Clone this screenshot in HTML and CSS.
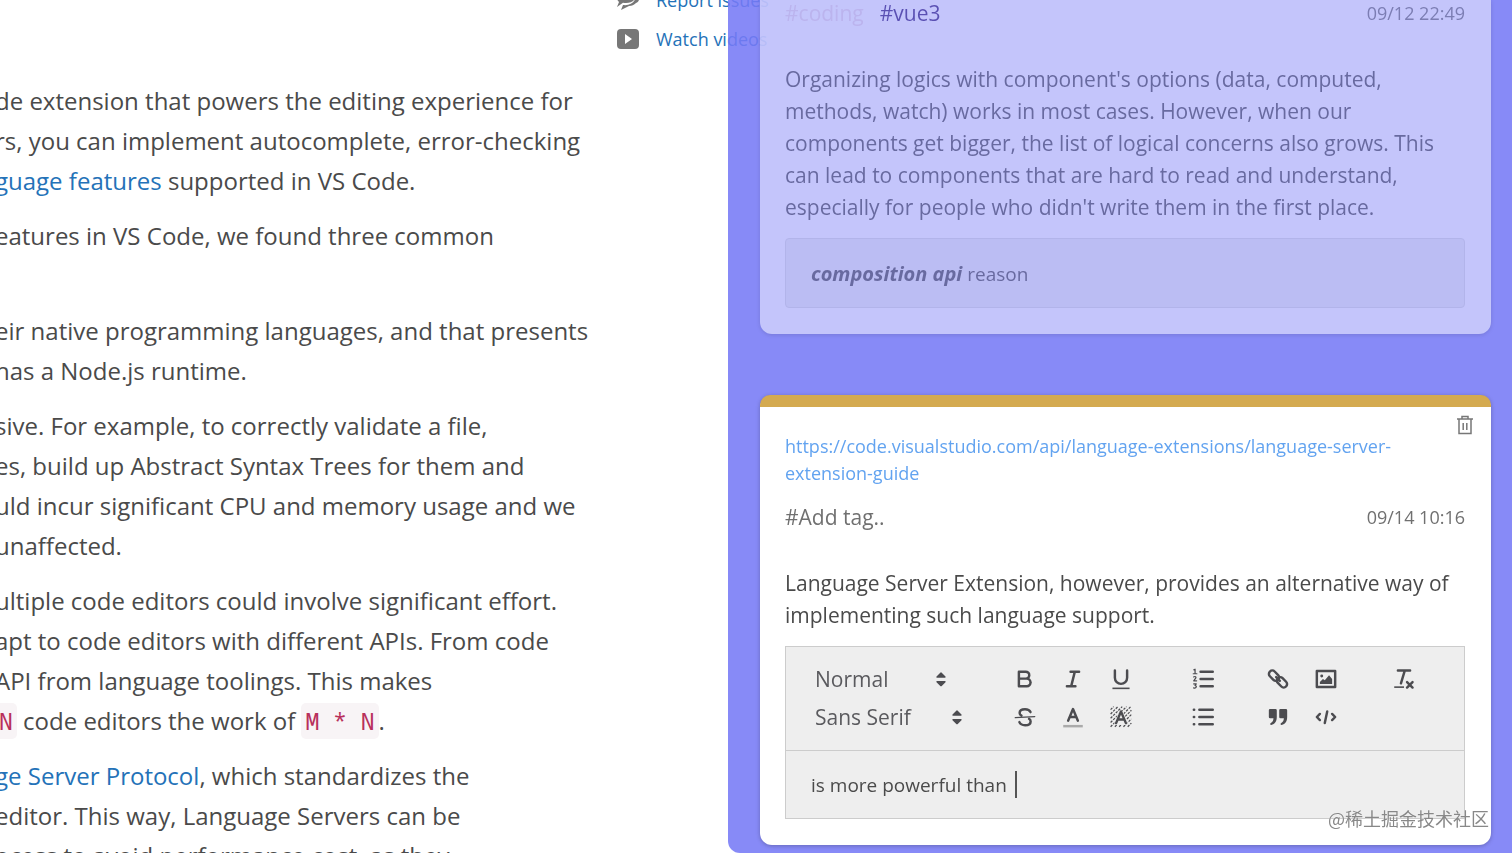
FILE: index.html
```html
<!DOCTYPE html>
<html lang="en">
    <head>
        <meta charset="utf-8">
        <title>Language Server Extension Guide</title>
        <link rel="stylesheet" href="styles.css">
    </head>
    <body>
        <div class="page">
            <main class="article">
                <p>de extension that powers the editing experience for<br>
                rs, you can implement autocomplete, error-checking<br>
                <a href="#">guage features</a> supported in VS Code.</p>
                <p>eatures in VS Code, we found three common<br>&nbsp;</p>
                <p>eir native programming languages, and that presents<br>
                has a Node.js runtime.</p>
                <p>sive. For example, to correctly validate a file,<br>
                es, build up Abstract Syntax Trees for them and<br>
                uld incur significant CPU and memory usage and we<br>
                unaffected.</p>
                <p>ultiple code editors could involve significant effort.<br>
                apt to code editors with different APIs. From code<br>
                API from language toolings. This makes<br>
                <code>N</code> code editors the work of <code>M * N</code>.</p>
                <p><a href="#">ge Server Protocol</a>, which standardizes the<br>
                editor. This way, Language Servers can be<br>
                ocess to avoid performance cost, as they</p>
            </main>
            <aside class="links">
                <a href="#">
                    <svg viewBox="0 0 24 24"><path d="M1 10c0-5 4-8 9-8s9 3 9 7-4 6-9 6c-1 0-2 0-3-.3L1 19l2-5c-1-1-2-2-2-4zM20 7c2 1 3 3 3 4 0 2-1 3-3 4-2 2-4 3-7 3l-8 4 2-5c7 1 13-3 13-10z"/></svg>
                    Report issues
                </a>
                <a href="#">
                    <svg viewBox="0 0 24 24"><path fill-rule="evenodd" d="M5 2h14a4 4 0 0 1 4 4v12a4 4 0 0 1-4 4H5a4 4 0 0 1-4-4V6a4 4 0 0 1 4-4zm4 5v10l7-5z"/></svg>
                    Watch videos
                </a>
            </aside>
        </div>

        <!-- notes drawer -->
        <section class="drawer">
            <article class="card card-old">
                <div class="meta">
                    <div class="tags"><span class="tag-pale">#coding</span><span class="tag">#vue3</span></div>
                    <time>09/12 22:49</time>
                </div>
                <p class="quote">Organizing logics with component's options (data, computed,<br>
                methods, watch) works in most cases. However, when our<br>
                components get bigger, the list of logical concerns also grows. This<br>
                can lead to components that are hard to read and understand,<br>
                especially for people who didn't write them in the first place.</p>
                <div class="memo"><strong><em>composition api</em></strong> reason</div>
            </article>

            <article class="card card-new">
                <button class="trash" aria-label="Delete">
                    <svg viewBox="0 0 18 20"><path d="M1 4h16M6 4V1.500h6V4M3 4v14.500h12V4M7.200 8v7M10.800 8v7"/></svg>
                </button>
                <a class="url" href="#">https://code.visualstudio.com/api/language-extensions/language-server-<br>extension-guide</a>
                <div class="meta">
                    <input class="add-tag" type="text" placeholder="#Add tag.." aria-label="Add tag">
                    <time>09/14 10:16</time>
                </div>
                <p class="quote">Language Server Extension, however, provides an alternative way of<br>
                implementing such language support.</p>

                <div class="editor">
                    <div class="toolbar">
                        <div class="pickers">
                            <div class="picker">
                                <select aria-label="Text size"><option>Normal</option></select>
                                <svg viewBox="0 0 18 18"><path d="M6 11h6l-3 3zM6 7.500h6l-3-3z"/></svg>
                            </div>
                            <div class="picker picker-font">
                                <select aria-label="Font"><option>Sans Serif</option></select>
                                <svg viewBox="0 0 18 18"><path d="M6 11h6l-3 3zM6 7.500h6l-3-3z"/></svg>
                            </div>
                        </div>
                        <div class="group three">
                            <button aria-label="Bold"><svg viewBox="0 0 18 18"><path d="M4 3h5.500A2.900 2.900 0 0 1 12.500 6 2.900 2.900 0 0 1 9.500 8.700H4V3zM4 8.700h6.500A3 3 0 0 1 13.500 11.800 3 3 0 0 1 10.500 15H4V8.700z"/></svg></button>
                            <button aria-label="Italic"><svg viewBox="0 0 18 18"><path d="M7 3h7M4 15h7M7.500 15l3-12"/></svg></button>
                            <button aria-label="Underline"><svg viewBox="0 0 18 18"><path d="M4 2v6a5 5 0 0 0 10 0V2"/><rect class="fill" x="2" y="16" width="14" height="1.300"/></svg></button>
                            <button aria-label="Strike"><svg viewBox="0 0 18 18"><path class="thin" d="M1 9.500l16-.8"/><path d="M13.500 5C12.800 3.400 11.200 2.700 9 2.700 6.400 2.700 4.600 3.900 4.600 5.700c0 1 .6 1.700 1.500 2.200M12.300 10.500c.8.500 1.300 1.200 1.300 2.100 0 1.900-1.900 3.100-4.500 3.100-2.300 0-4-.8-4.700-2.500"/></svg></button>
                            <button aria-label="Colour"><svg viewBox="0 0 18 18"><path class="pale" d="M1 16.500h16"/><path d="M5 12L9 2.500l4 9.500M6.500 9h5"/></svg></button>
                            <button aria-label="Background">
                                <svg viewBox="0 0 18 18">
                                    <path class="hatch" d="M.5 3L3 .5M.5 6.500l6-6M.5 10l9.500-9.500M.5 13.500L13.500.5M.5 17L17 .5M4 17L17.500 3.500M7.500 17L17.500 7M11 17l6.500-6.500M14.500 17l3-3"/>
                                    <path class="halo" d="M5 14L9 5l4 9z"/>
                                    <path d="M5 14L9 4.500l4 9.500M6.500 11h5"/>
                                </svg>
                            </button>
                        </div>
                        <div class="group">
                            <button aria-label="Ordered list"><svg viewBox="0 0 18 18"><path d="M7 3h10M7 9h10M7 15h10"/><path class="thin" d="M1.500 1.500l1-.5v3.500M1 4.700h3M1.300 7.300c1.300-.8 2.400 0 1.700 1L1.400 10.500h2.400M1.400 13h2.100l-1 1.300c1.800.2 1.200 2.600-1.200 2"/></svg></button>
                            <button aria-label="Bullet list"><svg viewBox="0 0 18 18"><path d="M6 3h11M6 9h11M6 15h11M1.500 3h.3M1.500 9h.3M1.500 15h.3"/></svg></button>
                        </div>
                        <div class="group two">
                            <button aria-label="Link"><svg viewBox="0 0 18 18"><rect x="1" y="3.500" width="9.500" height="5.500" rx="2.700" transform="rotate(45 5.750 6.250)"/><rect x="7.500" y="9" width="9.500" height="5.500" rx="2.700" transform="rotate(45 12.250 11.750)"/><path d="M7.500 7.500l3 3"/></svg></button>
                            <button aria-label="Image"><svg viewBox="0 0 18 18"><rect x="1.500" y="2.500" width="15" height="13"/><circle class="fill" cx="5.500" cy="6.500" r="1.200"/><path class="fill" d="M4 13v-1.500L6.500 9 8 10l3.500-4L14 9v4z"/></svg></button>
                            <button aria-label="Blockquote"><svg viewBox="0 0 18 18"><path class="fill" d="M1.500 3.500q0-1 1-1h4.500q1 0 1 1V9c0 3.500-1.500 6-4.500 6.500-1 0-1.300-1-.3-1.600C4.700 13 5.300 11.500 5.300 10H2.500q-1 0-1-1zM10 3.500q0-1 1-1h4.500q1 0 1 1V9c0 3.500-1.500 6-4.500 6.500-1 0-1.300-1-.3-1.600 1.500-.9 2.100-2.400 2.100-3.900H11q-1 0-1-1z"/></svg></button>
                            <button aria-label="Code"><svg viewBox="0 0 18 18"><path d="M4 6.500L1.500 9 4 11.500M14 6.500L16.500 9 14 11.500M10 4.500l-2 9.500"/></svg></button>
                        </div>
                        <div class="group">
                            <button aria-label="Clear format"><svg viewBox="0 0 18 18"><path d="M4 2h10M6.500 12.500L9.500 2.500M11.500 11.500l4.500 4.500M16 11.500L11.500 16"/><rect class="fill" x="1" y="15" width="8" height="1.300"/></svg></button>
                        </div>
                    </div>
                    <div class="field">
                        <input type="text" value="is more powerful than " aria-label="Note"><span class="caret"></span>
                    </div>
                </div>
            </article>
        </section>

        <div class="mark" lang="zh">@稀土掘金技术社区</div>
    </body>
</html>
```
FILE: styles.css
```css
*{
    box-sizing: border-box;
}
body{
    margin: 0;
    height: 100vh;
    overflow: hidden;
    background: #fff;
    color: #4a4a4a;
    font-family: "Open Sans", "Noto Sans", sans-serif;
}
p{
    margin: 0;
}
button, input, select{
    border: 0;
    padding: 0;
    background: none;
    color: inherit;
    font: inherit;
}
svg{
    display: block;
}

/* page behind the drawer, scrolled part way */
.page{
    display: flex;
    margin-top: -20px;
}
.article{
    flex: 0 0 616px;
    margin-left: -5px;
    padding-top: 101px;
    font-size: 24px;
    line-height: 40px;
    white-space: nowrap;
}
.article p{
    margin-bottom: 15px;
}
a{
    color: #2472b8;
    text-decoration: none;
}
code{
    padding: 2px 4px;
    border-radius: 5px;
    background: #f8f4f6;
    color: #b8305c;
    font: 23px "Noto Sans Mono", "DejaVu Sans Mono", monospace;
}
.links{
    padding-left: 5px;
    font-size: 18px;
    white-space: nowrap;
}
.links a{
    display: flex;
    align-items: center;
    gap: 16px;
    height: 39px;
}
.links svg{
    width: 24px;
    height: 24px;
    fill: #777;
}

/* drawer */
.drawer{
    position: fixed;
    top: 0;
    right: 0;
    bottom: 0;
    width: 784px;
    max-width: 100%;
    padding: 0 21px 0 32px;
    overflow: hidden;
    border-radius: 0 0 0 12px;
    background: rgba(118, 122, 246, .88);
}
.card{
    padding: 26px 26px 26px 25px;
    background: #fff;
    box-shadow: 0 1px 4px rgba(0, 0, 0, .25);
}
.card-old{
    padding-top: 0;
    border-radius: 0 0 12px 12px;
    opacity: .5;
}
.card-new{
    position: relative;
    margin-top: 61px;
    border-top: 12px solid #d4aa50;
    border-radius: 10px 10px 12px 12px;
}
.meta{
    display: flex;
    justify-content: space-between;
    align-items: center;
    height: 26px;
    font-size: 21px;
    color: #707070;
}
.meta time{
    font-size: 18px;
}
.tags{
    display: flex;
    gap: 16px;
}
.tag{
    color: #2e1670;
}
.tag-pale{
    color: #eedde4;
}
.quote{
    margin: 37px 0 15px;
    font-size: 21px;
    line-height: 32px;
    white-space: nowrap;
}
.memo{
    padding: 21px 25px 19px;
    border: 1px solid #ddd;
    border-radius: 4px;
    background: #eee;
    font-size: 19px;
    line-height: 27px;
}
.memo strong{
    font-size: 20px;
}
.url{
    display: block;
    margin-bottom: 17px;
    color: #62a3f0;
    font-size: 18px;
    line-height: 27px;
    white-space: nowrap;
}
.trash{
    position: absolute;
    top: 8px;
    right: 17px;
}
.trash svg{
    width: 18px;
    height: 20px;
    fill: none;
    stroke: #777;
    stroke-width: 1.5;
}
.add-tag::placeholder{
    color: #707070;
    opacity: 1;
}

/* editor */
.editor{
    border: 1px solid #ccc;
    background: #eee;
}
.toolbar{
    display: flex;
    align-items: flex-start;
    height: 104px;
    padding: 13px 0 0 29px;
    border-bottom: 1px solid #ccc;
    color: #5a5a5e;
    font-size: 21px;
}
.pickers{
    width: 186px;
}
.picker{
    position: relative;
    width: 138px;
    height: 38px;
}
.picker-font{
    width: 154px;
}
.picker select{
    width: 100%;
    height: 38px;
    appearance: none;
}
.picker svg{
    position: absolute;
    top: 7px;
    right: 0;
    pointer-events: none;
}
.toolbar svg{
    width: 24px;
    height: 24px;
    fill: none;
    stroke: #4c4c50;
    stroke-width: 2;
    stroke-linecap: round;
    stroke-linejoin: round;
}
.toolbar .picker svg{
    fill: #4c4c50;
    stroke-width: 1;
}
.toolbar svg .fill{
    fill: #4c4c50;
    stroke: none;
}
.toolbar svg .thin{
    stroke-width: 1;
}
.toolbar svg .hatch{
    stroke-width: 1;
    stroke-dasharray: 2 1;
    stroke-linecap: butt;
}
.toolbar svg .halo{
    fill: #eee;
    stroke: #eee;
    stroke-width: 3;
}
.toolbar svg .pale{
    stroke: #aaa;
    stroke-linecap: butt;
}
/* the drawings fill their box, so the buttons show them a little smaller */
.group svg{
    width: 22px;
    height: 22px;
}
.group{
    display: grid;
    grid-template-columns: 48px;
    margin-right: 27px;
}
.three{
    grid-template-columns: repeat(3, 48px);
    margin-right: 34px;
}
.two{
    grid-template-columns: repeat(2, 48px);
    margin-right: 30px;
}
.group button{
    display: flex;
    align-items: center;
    justify-content: center;
    height: 38px;
}
.field{
    display: flex;
    align-items: center;
    height: 67px;
    padding-left: 25px;
    font-size: 19px;
}
.field input{
    field-sizing: content;
}
.caret{
    width: 2px;
    height: 27px;
    margin-left: 3px;
    background: #555;
}

.mark{
    position: fixed;
    right: 23px;
    bottom: 21px;
    color: #888;
    font: 18px/27px "Noto Sans CJK SC", sans-serif;
    text-shadow: 0 0 1px #fff;
}
```
